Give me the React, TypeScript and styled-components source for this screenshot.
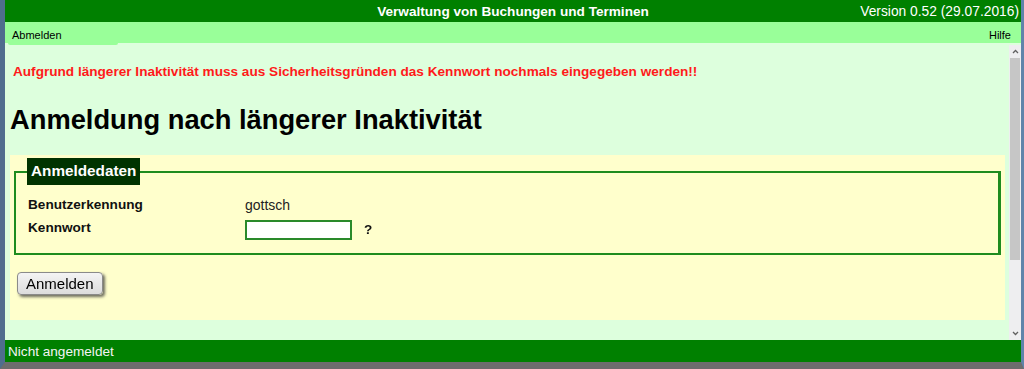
import styled, { createGlobalStyle } from "styled-components";

const GlobalStyle = createGlobalStyle`
  html, body {
    margin: 0;
    padding: 0;
    background: #6d6d6d;
  }
  body {
    font-family: "Liberation Sans", Arial, sans-serif;
  }
`;

const Frame = styled.div`
  box-sizing: border-box;
  width: 1024px;
  height: 369px;
  display: flex;
  flex-direction: column;
  border-left: 5px solid #4f6e8d;
  border-right: 3px solid #5f84aa;
  border-bottom: 7px solid #6d6d6d;
  overflow: hidden;
`;

const Header = styled.header`
  height: 22px;
  flex: none;
  background: #008000;
  color: #ffffff;
  display: grid;
  grid-template-columns: 1fr auto 1fr;
  align-items: center;
`;

const Title = styled.div`
  grid-column: 2;
  font-size: 13.6px;
  font-weight: bold;
`;

const Version = styled.div`
  grid-column: 3;
  justify-self: end;
  font-size: 13.8px;
  padding-right: 2px;
`;

const MenuBar = styled.nav`
  height: 21px;
  flex: none;
  background: #99ff99;
  display: flex;
  justify-content: space-between;
  align-items: flex-start;
  font-size: 11px;
  color: #000;
`;

const MenuTab = styled.div<{ $active?: boolean }>`
  position: relative;
  z-index: 1;
  height: ${(p) => (p.$active ? "23px" : "21px")};
  margin-left: ${(p) => (p.$active ? "3px" : "0")};
  margin-right: ${(p) => (p.$active ? "0" : "6px")};
  width: ${(p) => (p.$active ? "110px" : "auto")};
  box-sizing: border-box;
  padding: 7px 4px 0;
  background: #99ff99;
  border-radius: 0 0 2px 2px;
`;

const Main = styled.div`
  flex: 1;
  display: flex;
  min-height: 0;
  background: #ddffdd;
`;

const Content = styled.main`
  flex: 1;
  padding: 0 4px 0 5px;
  overflow: hidden;
`;

const Warning = styled.p`
  margin: 21px 0 0 3px;
  color: #ff1a1a;
  font-size: 13.6px;
  font-weight: bold;
  line-height: 16px;
`;

const Heading = styled.h1`
  margin: 24px 0 0 0;
  font-size: 27.3px;
  line-height: 32px;
  font-weight: bold;
  color: #000;
`;

const Panel = styled.section`
  margin-top: 19px;
  background: #ffffcc;
  padding: 3px 4px 25px 4px;
`;

const Fieldset = styled.fieldset`
  margin: 0;
  padding: 8px 12px 13px 12px;
  border: 2px solid #1e8c1e;
  border-right-width: 3px;
  min-width: 0;
`;

const Legend = styled.legend`
  margin-left: -1px;
  padding: 5px 4px 6px 4px;
  background: #003300;
  color: #ffffff;
  font-size: 15.3px;
  font-weight: bold;
  line-height: 16px;
`;

const FieldGrid = styled.div`
  display: grid;
  grid-template-columns: 205px auto auto 1fr;
  column-gap: 12px;
  row-gap: 7px;
  align-items: start;
  font-size: 13.6px;
  line-height: 16px;
  margin-top: 4px;
`;

const Label = styled.div`
  font-weight: bold;
  color: #111;
`;

const Value = styled.div`
  grid-column: 2 / span 3;
  color: #222;
  font-size: 14px;
`;

const PasswordInput = styled.input`
  box-sizing: border-box;
  width: 107px;
  height: 20px;
  margin: 0;
  border: 2px solid #2a8a2a;
  background: #ffffff;
  padding: 0 2px;
  font-size: 13px;
  outline: none;
`;

const Hint = styled.div`
  font-weight: bold;
  color: #111;
  padding-top: 2px;
`;

const SubmitButton = styled.button`
  margin: 17px 0 0 3px;
  font-family: "Liberation Sans", Arial, sans-serif;
  font-size: 15px;
  color: #000;
  padding: 2px 8px 2px 8px;
  border: 1px solid #8a8a8a;
  border-radius: 4px;
  background: linear-gradient(to bottom, #f4f4f4, #dcdcdc);
  box-shadow: 2px 2px 3px rgba(60, 60, 60, 0.75);
`;

const Scrollbar = styled.div`
  width: 12px;
  flex: none;
  margin-top: 2px;
  display: flex;
  flex-direction: column;
  background: #eeeef0;
`;

const ArrowButton = styled.div`
  height: 13px;
  flex: none;
  display: flex;
  align-items: center;
  justify-content: center;
`;

const Thumb = styled.div`
  height: 202px;
  flex: none;
  margin: 0 1px;
  background: #c6c6c6;
`;

const Track = styled.div`
  flex: 1;
`;

const Footer = styled.footer`
  height: 22px;
  flex: none;
  background: #008000;
  color: #f4f4f4;
  font-size: 13.6px;
  display: flex;
  align-items: center;
  padding-left: 3px;
`;

function Chevron({ up }: { up?: boolean }) {
  return (
    <svg width="7" height="5" viewBox="0 0 7 5">
      <polyline
        points={up ? "1,4 3.5,1.5 6,4" : "1,1 3.5,3.5 6,1"}
        fill="none"
        stroke="#606060"
        strokeWidth="1.3"
      />
    </svg>
  );
}

export default function App() {
  return (
    <>
      <GlobalStyle />
      <Frame>
        <Header>
          <Title>Verwaltung von Buchungen und Terminen</Title>
          <Version>Version 0.52 (29.07.2016)</Version>
        </Header>
        <MenuBar>
          <MenuTab $active>Abmelden</MenuTab>
          <MenuTab>Hilfe</MenuTab>
        </MenuBar>
        <Main>
          <Content>
            <Warning>
              Aufgrund längerer Inaktivität muss aus Sicherheitsgründen das
              Kennwort nochmals eingegeben werden!!
            </Warning>
            <Heading>Anmeldung nach längerer Inaktivität</Heading>
            <Panel>
              <Fieldset>
                <Legend>Anmeldedaten</Legend>
                <FieldGrid>
                  <Label>Benutzerkennung</Label>
                  <Value>gottsch</Value>
                  <Label>Kennwort</Label>
                  <PasswordInput type="password" autoFocus />
                  <Hint>?</Hint>
                </FieldGrid>
              </Fieldset>
              <SubmitButton type="button">Anmelden</SubmitButton>
            </Panel>
          </Content>
          <Scrollbar>
            <ArrowButton>
              <Chevron up />
            </ArrowButton>
            <Thumb />
            <Track />
            <ArrowButton>
              <Chevron />
            </ArrowButton>
          </Scrollbar>
        </Main>
        <Footer>Nicht angemeldet</Footer>
      </Frame>
    </>
  );
}
